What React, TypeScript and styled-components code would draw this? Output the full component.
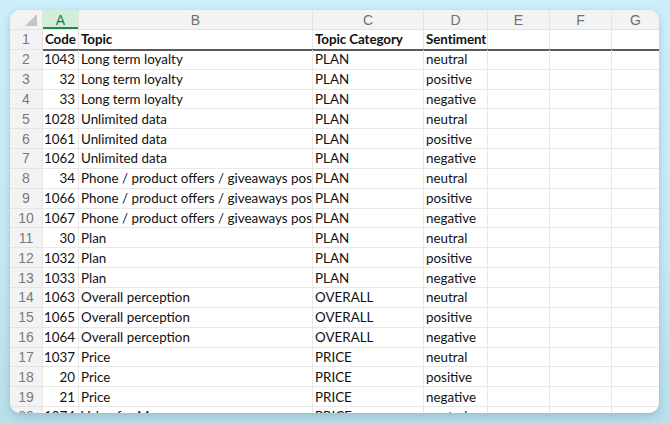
import React from 'react';
import styled, { createGlobalStyle } from 'styled-components';

const GlobalStyle = createGlobalStyle`
  html, body {
    margin: 0;
    padding: 0;
  }
  body {
    width: 670px;
    height: 424px;
    overflow: hidden;
    background: linear-gradient(180deg, #cdeffc 0%, #c6e9f5 60%, #b9dfea 100%);
  }
`;

const COLS = '33px 36px 234px 111px 64px 62px 62px 1fr';
const ROW_H = 19.85;

type Row = [string, string, string, string];

const rows: Row[] = [
  ['1043', 'Long term loyalty', 'PLAN', 'neutral'],
  ['32', 'Long term loyalty', 'PLAN', 'positive'],
  ['33', 'Long term loyalty', 'PLAN', 'negative'],
  ['1028', 'Unlimited data', 'PLAN', 'neutral'],
  ['1061', 'Unlimited data', 'PLAN', 'positive'],
  ['1062', 'Unlimited data', 'PLAN', 'negative'],
  ['34', 'Phone / product offers / giveaways positive', 'PLAN', 'neutral'],
  ['1066', 'Phone / product offers / giveaways positive', 'PLAN', 'positive'],
  ['1067', 'Phone / product offers / giveaways positive', 'PLAN', 'negative'],
  ['30', 'Plan', 'PLAN', 'neutral'],
  ['1032', 'Plan', 'PLAN', 'positive'],
  ['1033', 'Plan', 'PLAN', 'negative'],
  ['1063', 'Overall perception', 'OVERALL', 'neutral'],
  ['1065', 'Overall perception', 'OVERALL', 'positive'],
  ['1064', 'Overall perception', 'OVERALL', 'negative'],
  ['1037', 'Price', 'PRICE', 'neutral'],
  ['20', 'Price', 'PRICE', 'positive'],
  ['21', 'Price', 'PRICE', 'negative'],
  ['1074', 'Value for Money', 'PRICE', 'neutral'],
];

const letters = ['A', 'B', 'C', 'D', 'E', 'F', 'G'];

export default function App() {
  return (
    <>
      <GlobalStyle />
      <Page>
        <Card>
          <HeaderRow>
            <Corner>
              <svg width="12" height="12" viewBox="0 0 12 12">
                <polygon points="12,0 12,12 0,12" fill="#c4c4c4" />
              </svg>
            </Corner>
            {letters.map((l, i) => (
              <ColHead key={l} $active={i === 0}>
                {l}
              </ColHead>
            ))}
          </HeaderRow>

          <Row $title>
            <RowNum>1</RowNum>
            <Cell $bold>Code</Cell>
            <Cell $bold>Topic</Cell>
            <Cell $bold>Topic Category</Cell>
            <Cell $bold>Sentiment</Cell>
            <Cell />
            <Cell />
            <Cell $last />
          </Row>

          {rows.map((r, i) => (
            <Row key={i}>
              <RowNum>{i + 2}</RowNum>
              <Cell $num>{r[0]}</Cell>
              <Cell>{r[1]}</Cell>
              <Cell>{r[2]}</Cell>
              <Cell>{r[3]}</Cell>
              <Cell />
              <Cell />
              <Cell $last />
            </Row>
          ))}
        </Card>
      </Page>
    </>
  );
}

const Page = styled.div`
  padding: 10px 11px 11px 10px;
  height: 424px;
  box-sizing: border-box;
`;

const Card = styled.div`
  width: 649px;
  height: 403px;
  background: #ffffff;
  border-radius: 10px;
  overflow: hidden;
  box-shadow: 0 3px 8px rgba(40, 90, 110, 0.25), 0 0 1px rgba(0, 0, 0, 0.08);
`;

const HeaderRow = styled.div`
  display: grid;
  grid-template-columns: ${COLS};
  height: 20px;
  background: #f3f3f3;
  border-bottom: 1px solid #e4e4e4;
  box-sizing: border-box;
`;

const Corner = styled.div`
  display: flex;
  align-items: flex-end;
  justify-content: flex-end;
  padding: 0 5px 3px 0;
  border-right: 1px solid #e4e4e4;
`;

const ColHead = styled.div<{ $active?: boolean }>`
  display: flex;
  align-items: center;
  justify-content: center;
  font-family: 'Liberation Sans', Arial, sans-serif;
  font-size: 14px;
  color: ${(p) => (p.$active ? '#1d7a43' : '#707070')};
  background: ${(p) => (p.$active ? '#d2eedb' : 'transparent')};
  border-right: 1px solid #e4e4e4;
  box-shadow: ${(p) => (p.$active ? 'inset 0 -2px 0 #1e8a4c' : 'none')};
  &:last-child {
    border-right: none;
  }
`;

const Row = styled.div<{ $title?: boolean }>`
  display: grid;
  grid-template-columns: ${COLS};
  height: ${ROW_H}px;
  position: relative;
  ${(p) =>
    p.$title &&
    `
    &::after {
      content: '';
      position: absolute;
      left: 33px;
      right: 0;
      bottom: -1px;
      height: 2px;
      background: #5a5a5a;
    }
  `}
`;

const RowNum = styled.div`
  display: flex;
  align-items: center;
  justify-content: center;
  background: #f3f3f3;
  border-right: 1px solid #e4e4e4;
  border-bottom: 1px solid #e4e4e4;
  font-family: 'Liberation Sans', Arial, sans-serif;
  font-size: 14px;
  color: #7a7a7a;
`;

const Cell = styled.div<{ $num?: boolean; $bold?: boolean; $last?: boolean }>`
  display: flex;
  align-items: center;
  justify-content: ${(p) => (p.$num ? 'flex-end' : 'flex-start')};
  padding: 0 ${(p) => (p.$num ? '3px' : '0')} 0 ${(p) => (p.$num ? '0' : '2px')};
  border-right: ${(p) => (p.$last ? 'none' : '1px solid #e8e8e8')};
  border-bottom: 1px solid #e8e8e8;
  font-family: Lato, 'Open Sans', sans-serif;
  font-size: 13.4px;
  font-weight: ${(p) => (p.$bold ? 700 : 400)};
  letter-spacing: ${(p) => (p.$bold ? '-0.1px' : '0')};
  color: #111;
  white-space: nowrap;
  overflow: hidden;
  min-width: 0;
`;
